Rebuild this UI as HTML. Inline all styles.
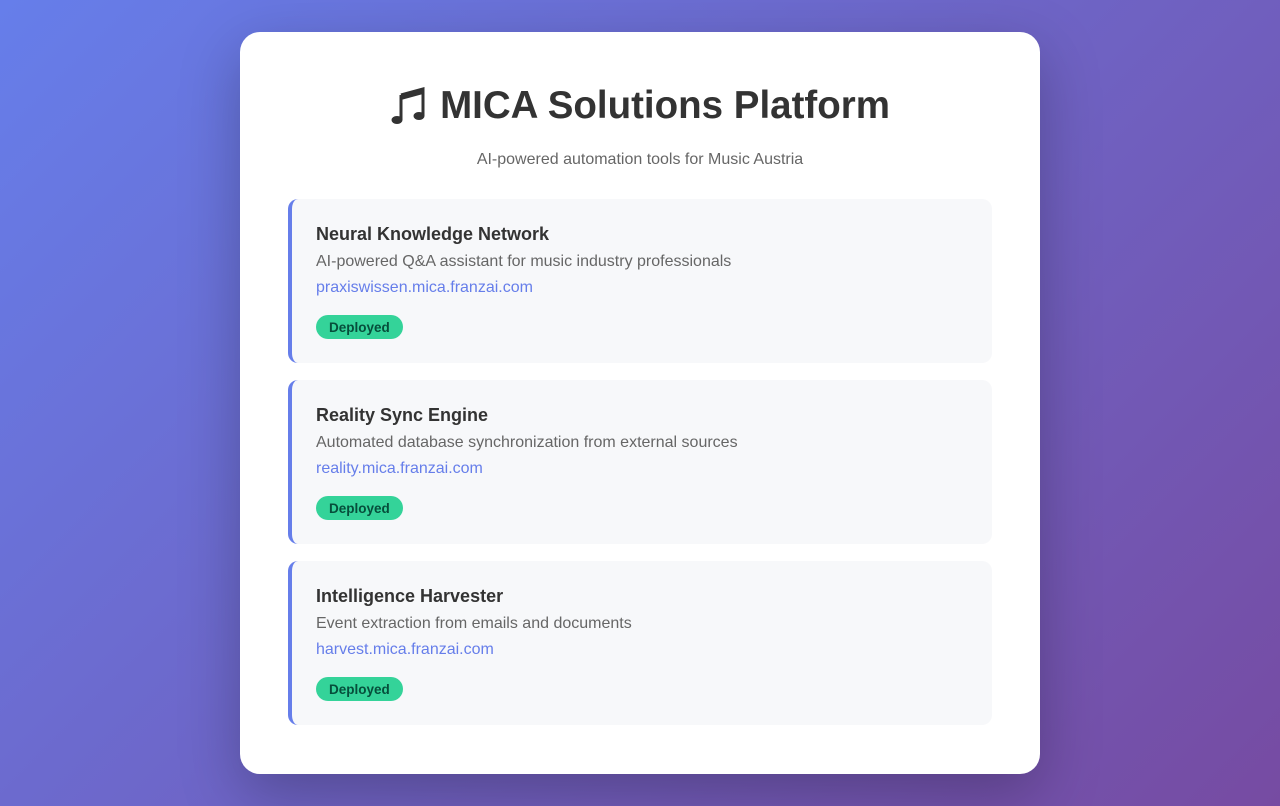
<!DOCTYPE html>
<html><head><meta charset="utf-8"><style>
*{margin:0;padding:0;box-sizing:border-box}
body{width:1280px;height:806px;overflow:hidden;font-family:"Liberation Sans",Arial,sans-serif;background:linear-gradient(135deg,#667eea 0%,#764ba2 100%);}
.card{position:absolute;left:240px;top:32px;width:800px;height:742px;background:#fff;border-radius:20px;box-shadow:0 20px 60px rgba(0,0,0,.25);padding:48px}
h1{font-size:38.5px;font-weight:bold;color:#333;text-align:center;height:52px;line-height:52px;margin-top:0;display:flex;justify-content:center;align-items:center;gap:8px}
.sub{text-align:center;color:#666;font-size:16px;margin-top:18px;line-height:20px}
.item{position:relative;background:#f7f8fa;border-left:4px solid #667eea;border-radius:10px;height:164px;padding:24px 24px 0 24px;margin-top:17px}
.first{margin-top:29px}
.t{font-size:18px;font-weight:bold;color:#333;line-height:22px}
.d{font-size:16px;color:#666;line-height:20px;margin-top:7px}
.l{font-size:16px;color:#667eea;line-height:20px;margin-top:6px}
.b{display:inline-block;background:#34d399;color:#064e3b;font-size:13.5px;font-weight:bold;height:24px;line-height:25px;padding:0 13px;border-radius:12px;margin-top:17px}
</style></head><body>
<div class="card">
<h1><svg width="42" height="42" viewBox="0 0 42 42"><path d="M11 10 L33 4 L33 31" stroke="#333" stroke-width="3" fill="none"/><path d="M11 10 L33 4 L33 9 L11 15Z" fill="#333"/><line x1="11" y1="10" x2="11" y2="35" stroke="#333" stroke-width="3"/><ellipse cx="7" cy="35" rx="5.5" ry="4" fill="#333"/><ellipse cx="29" cy="31" rx="5.5" ry="4" fill="#333"/></svg>MICA Solutions Platform</h1>
<div class="sub">AI-powered automation tools for Music Austria</div>
<div class="item first"><div class="t">Neural Knowledge Network</div><div class="d">AI-powered Q&amp;A assistant for music industry professionals</div><div class="l">praxiswissen.mica.franzai.com</div><span class="b">Deployed</span></div>
<div class="item"><div class="t">Reality Sync Engine</div><div class="d">Automated database synchronization from external sources</div><div class="l">reality.mica.franzai.com</div><span class="b">Deployed</span></div>
<div class="item"><div class="t">Intelligence Harvester</div><div class="d">Event extraction from emails and documents</div><div class="l">harvest.mica.franzai.com</div><span class="b">Deployed</span></div>
</div>
</body></html>
